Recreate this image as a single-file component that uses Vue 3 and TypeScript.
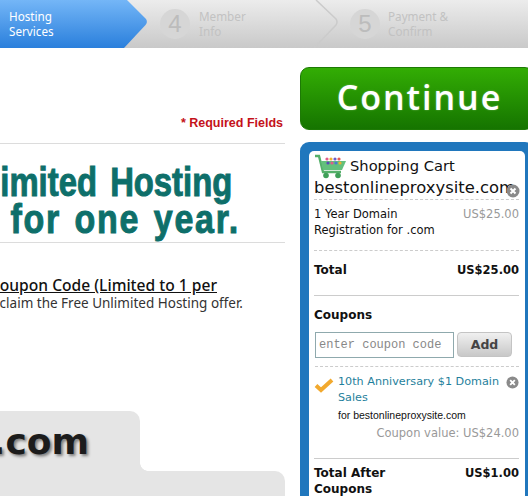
<template>
  <div class="page">
    <nav class="steps">
      <div class="step active">
        <span class="step-label">Hosting<br />Services</span>
        <svg class="arrow" width="26" height="48" viewBox="0 0 26 48">
          <defs>
            <linearGradient id="blueFill" gradientUnits="userSpaceOnUse" x1="0" y1="0" x2="0" y2="48">
              <stop offset="0" stop-color="#74b6f7" />
              <stop offset="1" stop-color="#2a7fdc" />
            </linearGradient>
          </defs>
          <path d="M0 0 H3 L22 19 Q24 22 21.5 25 L0 48 Z" fill="url(#blueFill)" />
        </svg>
      </div>
      <div class="step wide">
        <span class="step-num">4</span>
        <span class="step-label">Member<br />Info</span>
        <svg class="chevron" width="30" height="48" viewBox="0 0 30 48">
          <path d="M2 0 L22 19 Q24 22 22 25 L0 48" fill="none" stroke="#cbcbcb" stroke-width="1.5" />
        </svg>
      </div>
      <div class="step last">
        <span class="step-num">5</span>
        <span class="step-label">Payment &amp;<br />Confirm</span>
      </div>
    </nav>

    <div class="columns">
      <main class="left">
        <p class="required">* Required Fields</p>
        <div class="promo">
          <div class="promo-line one">Unlimited Hosting</div>
          <div class="promo-line two">for one year.</div>
        </div>
        <div class="coupon-note">
          <div class="note-title"><u>Coupon Code (Limited to 1 per</u></div>
          <div class="note-body">claim the Free Unlimited Hosting offer.</div>
        </div>
        <div class="domain-tab"><span>.com</span></div>
        <div class="domain-body"></div>
      </main>

      <aside class="side">
        <button class="continue">Continue</button>
        <section class="cart">
          <div class="cart-inner">
            <h2 class="cart-title">
              <svg width="34" height="25" viewBox="0 0 34 25">
                <path d="M1 2 H5 L9 18 H27" fill="none" stroke="#55b06a" stroke-width="2.4" />
                <path d="M7 7 H32 L28 16 H9 Z" fill="#63c07c" />
                <circle cx="12" cy="21.5" r="2.8" fill="#3f9f58" />
                <circle cx="24" cy="21.5" r="2.8" fill="#3f9f58" />
                <circle cx="13" cy="5" r="1.6" fill="#e05a8a" />
                <circle cx="17" cy="5" r="1.6" fill="#f0b030" />
                <circle cx="21" cy="5" r="1.6" fill="#6a5acd" />
                <circle cx="25" cy="5" r="1.6" fill="#e05a5a" />
                <circle cx="14" cy="9" r="1.6" fill="#5a4ab8" />
                <circle cx="18" cy="9" r="1.6" fill="#e05a8a" />
                <circle cx="22" cy="9" r="1.6" fill="#4a7ad0" />
                <circle cx="26" cy="9" r="1.6" fill="#f0b030" />
              </svg>
              <span>Shopping Cart</span>
            </h2>
            <div class="cart-domain">
              <span>bestonlineproxysite.com</span>
              <svg class="remove over" width="14" height="14" viewBox="0 0 14 14">
                <circle cx="7" cy="7" r="6.5" fill="#8a8a8a" />
                <path d="M4.5 4.5 L9.5 9.5 M9.5 4.5 L4.5 9.5" stroke="#fff" stroke-width="2" />
              </svg>
            </div>
            <div class="line-item">
              <span>1 Year Domain Registration for .com</span>
              <span class="muted">US$25.00</span>
            </div>
            <div class="total-row">
              <b>Total</b>
              <b class="price">US$25.00</b>
            </div>
            <h3 class="coupons-title">Coupons</h3>
            <div class="coupon-form">
              <input class="coupon-input" placeholder="enter coupon code" />
              <button class="add">Add</button>
            </div>
            <div class="applied">
              <svg class="check" width="20" height="16" viewBox="0 0 20 16">
                <path d="M2 8.5 L7 13 L18 3" fill="none" stroke="#f2a92e" stroke-width="4" />
              </svg>
              <div class="applied-text">
                <div class="applied-name">10th Anniversary $1 Domain Sales</div>
                <div class="applied-for">for bestonlineproxysite.com</div>
              </div>
              <svg class="remove" width="13" height="13" viewBox="0 0 14 14">
                <circle cx="7" cy="7" r="6.5" fill="#8a8a8a" />
                <path d="M4.5 4.5 L9.5 9.5 M9.5 4.5 L4.5 9.5" stroke="#fff" stroke-width="2" />
              </svg>
            </div>
            <div class="applied-value">Coupon value: US$24.00</div>
            <div class="after-row">
              <b>Total After<br />Coupons</b>
              <b class="price">US$1.00</b>
            </div>
          </div>
        </section>
      </aside>
    </div>
  </div>
</template>

<script setup lang="ts">
</script>

<style>
html,
body {
  margin: 0;
  overflow: hidden;
  background: #fff;
}
</style>

<style scoped>
.page {
  width: 528px;
  height: 496px;
  overflow: hidden;
  font-family: "DejaVu Sans", sans-serif;
  color: #111;
}

.steps {
  display: flex;
  height: 48px;
  background: linear-gradient(#ececec, #c9c9c9);
}

.step {
  position: relative;
  display: flex;
  align-items: center;
  gap: 9px;
  box-sizing: border-box;
  font-size: 11.7px;
  line-height: 15px;
  color: #c2c2c2;
  font-family: "Noto Sans", sans-serif;
}

.step.active {
  width: 124px;
  padding-left: 9px;
  color: #fff;
  background: linear-gradient(#74b6f7, #2a7fdc);
}

.step.wide {
  width: 190px;
  padding-left: 36px;
}

.step.last {
  padding-left: 36px;
  gap: 8px;
}

.arrow {
  position: absolute;
  left: 124px;
  top: 0;
}

.chevron {
  position: absolute;
  left: 100%;
  top: 0;
}

.step-num {
  width: 30px;
  height: 30px;
  border-radius: 50%;
  background: #d6d6d6;
  color: #bcbcbc;
  font-size: 24px;
  line-height: 30px;
  text-align: center;
  font-family: "Liberation Sans", sans-serif;
}

.columns {
  display: flex;
  gap: 15px;
}

.left {
  width: 285px;
  flex: none;
}

.required {
  margin: 0;
  padding: 67px 2px 12px 0;
  font-size: 12.5px;
  line-height: 16px;
  font-weight: bold;
  text-align: right;
  color: #c4121a;
  font-family: "Liberation Sans", sans-serif;
  border-bottom: 1px solid #dcdcdc;
}

.promo {
  display: flex;
  flex-direction: column;
  align-items: flex-end;
  height: 99px;
  box-sizing: border-box;
  padding-top: 20px;
  border-bottom: 1px solid #dcdcdc;
  color: #0e6f6a;
  font-family: "Liberation Sans", sans-serif;
  font-weight: bold;
  font-size: 40px;
  line-height: 36px;
  white-space: nowrap;
  -webkit-text-stroke: 1px #0e6f6a;
}

.promo-line {
  transform-origin: right center;
}

.promo-line.one {
  margin-right: 53px;
  transform: scaleX(0.82);
  word-spacing: 5px;
}

.promo-line.two {
  margin-top: 1px;
  margin-right: 45px;
  transform: scaleX(0.85);
  letter-spacing: 2px;
  word-spacing: 3px;
}

.coupon-note {
  display: flex;
  flex-direction: column;
  align-items: flex-end;
  padding-top: 33px;
  white-space: nowrap;
  font-family: "Noto Sans", sans-serif;
}

.note-title {
  padding-right: 68px;
  font-size: 15.6px;
  line-height: 18px;
  font-weight: 500;
}

.note-body {
  padding-right: 42px;
  font-size: 13.5px;
  line-height: 19px;
  color: #333;
}

.domain-tab {
  position: relative;
  width: 140px;
  height: 60px;
  margin-top: 98px;
  box-sizing: border-box;
  padding: 1px 51px 0 0;
  display: flex;
  justify-content: flex-end;
  align-items: center;
  background: #e5e5e5;
  border-top-right-radius: 10px;
  font-size: 36px;
  font-weight: bold;
  color: #1c1c1c;
  text-shadow: 2px 2px 3px rgba(0, 0, 0, 0.45);
  white-space: nowrap;
}

.domain-tab::after {
  content: "";
  position: absolute;
  left: 100%;
  bottom: 0;
  width: 8px;
  height: 8px;
  background: radial-gradient(circle at 100% 0, #fff 7.5px, #e5e5e5 8px);
}

.domain-body {
  height: 40px;
  background: #e5e5e5;
  border-top-right-radius: 10px;
}

.side {
  width: 234px;
  flex: none;
  padding-top: 19px;
}

.continue {
  display: block;
  width: 100%;
  height: 63px;
  padding: 0 0 4px 5px;
  border: 1px solid #1d7a05;
  border-radius: 9px;
  background: linear-gradient(#33ad04, #157400);
  color: #fff;
  font-family: "Open Sans", sans-serif;
  font-size: 34px;
  font-weight: 600;
  letter-spacing: 2px;
  text-shadow: 0 0 2px rgba(255, 255, 255, 0.35);
}

.cart {
  margin-top: 12px;
  padding: 9px;
  background: #2077bd;
  border-radius: 9px;
}

.cart-inner {
  padding: 4px 6px 20px 5px;
  background: #fff;
  border-radius: 5px;
  font-size: 11.5px;
  line-height: 16px;
}

.cart-title {
  display: flex;
  align-items: center;
  gap: 2px;
  margin: 0;
  height: 22px;
  font-size: 14.7px;
  font-weight: normal;
}

.cart-domain {
  position: relative;
  height: 22px;
  font-size: 16.4px;
  line-height: 22px;
  white-space: nowrap;
  border-bottom: 1px dashed #ccc;
}

.remove.over {
  position: absolute;
  right: -1px;
  top: 7px;
}

.line-item {
  display: flex;
  justify-content: space-between;
  padding: 6px 0 12px;
  border-bottom: 1px dashed #ccc;
}

.line-item > span:first-child {
  width: 130px;
}

.muted {
  color: #999;
}

.total-row {
  display: flex;
  justify-content: space-between;
  padding: 11px 0 17px;
  border-bottom: 1px solid #ccc;
  font-size: 12px;
}

.price {
  font-size: 11.5px;
}

.coupons-title {
  margin: 11px 0 9px;
  font-size: 12px;
  line-height: 16px;
}

.coupon-form {
  display: flex;
  gap: 3px;
  margin-left: 1px;
  padding-bottom: 8px;
  border-bottom: 1px dashed #ccc;
}

.coupon-input {
  width: 139px;
  height: 26px;
  box-sizing: border-box;
  padding: 0 3px;
  border: 1px solid #8fa9ad;
  font-family: "Liberation Mono", monospace;
  font-size: 12px;
}

.coupon-input::placeholder {
  color: #888;
}

.add {
  width: 55px;
  height: 25px;
  padding: 0;
  border: 1px solid #c4c4c4;
  border-radius: 4px;
  background: linear-gradient(#f0f0f0, #c8c8c8);
  font-family: "DejaVu Sans", sans-serif;
  font-size: 12.5px;
  font-weight: bold;
  color: #444;
}

.applied {
  display: flex;
  gap: 4px;
  padding-top: 7px;
}

.check {
  flex: none;
  margin-top: 3px;
}

.applied-text {
  flex: 1;
}

.applied-name {
  font-size: 11.2px;
  color: #1f7f9c;
}

.applied-for {
  margin-top: 1px;
  font-size: 10.5px;
  font-family: "Liberation Sans", sans-serif;
}

.applied .remove {
  flex: none;
  margin-top: 2px;
}

.applied-value {
  margin-top: 2px;
  padding-bottom: 17px;
  text-align: right;
  color: #999;
  border-bottom: 1px solid #ccc;
}

.after-row {
  display: flex;
  justify-content: space-between;
  padding-top: 6px;
  font-size: 12px;
}
</style>
